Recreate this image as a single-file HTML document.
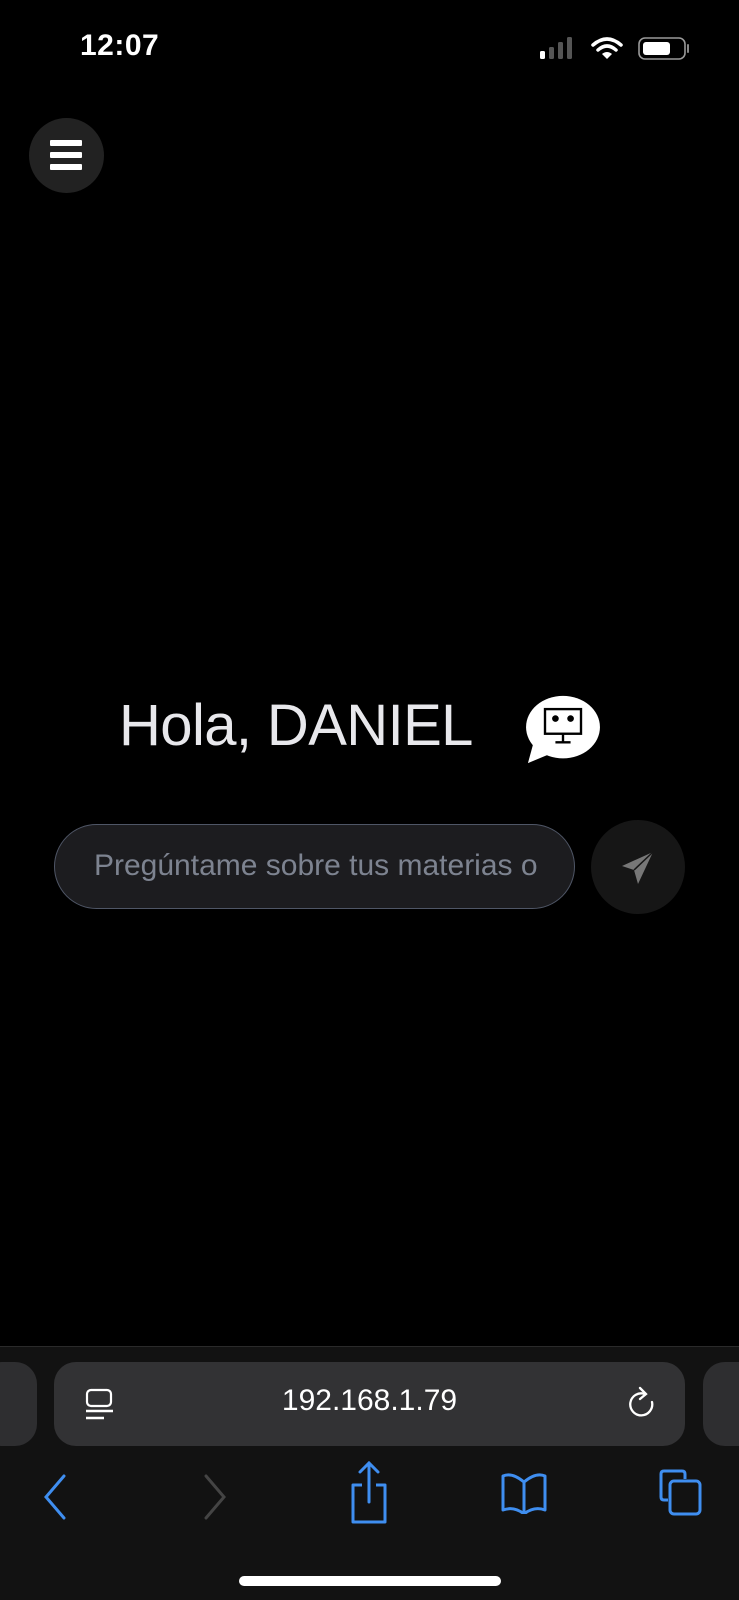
<!DOCTYPE html>
<html><head><meta charset="utf-8"><style>
*{margin:0;padding:0;box-sizing:border-box}
body{width:739px;height:1600px;background:#000;position:relative;overflow:hidden;font-family:"Liberation Sans",sans-serif;color:#fff}
.abs{position:absolute}
</style></head><body>
<div class="abs" style="left:80px;top:29px;font-size:30px;font-weight:bold;letter-spacing:0.5px">12:07</div>
<svg class="abs" style="left:538px;top:36px" width="154" height="28" viewBox="0 0 154 28">
<rect x="2" y="15" width="5" height="8" rx="1.5" fill="#fff"/>
<rect x="11" y="11" width="5" height="12" rx="1.5" fill="#555"/>
<rect x="20" y="6" width="5" height="17" rx="1.5" fill="#555"/>
<rect x="29" y="1" width="5" height="22" rx="1.5" fill="#555"/>
<g transform="translate(10,0)">
<path d="M45 9 Q59 -3 73 9" stroke="#fff" stroke-width="3.5" fill="none" stroke-linecap="round"/>
<path d="M50 14 Q59 6 68 14" stroke="#fff" stroke-width="3.5" fill="none" stroke-linecap="round"/>
<path d="M54 18 L59 23 L64 18 Q59 14 54 18Z" fill="#fff"/>
</g>
<rect x="101" y="2" width="46" height="21" rx="6" stroke="#999" stroke-width="1.6" fill="none"/>
<rect x="105" y="6" width="27" height="13" rx="3" fill="#fff"/>
<path d="M150 9 v7" stroke="#888" stroke-width="2" stroke-linecap="round"/>
</svg>
<div class="abs" style="left:29px;top:118px;width:75px;height:75px;border-radius:50%;background:#222"></div>
<div class="abs" style="left:50px;top:140px;width:32px;height:6px;background:#fff;border-radius:1px"></div>
<div class="abs" style="left:50px;top:152px;width:32px;height:6px;background:#fff;border-radius:1px"></div>
<div class="abs" style="left:50px;top:164px;width:32px;height:6px;background:#fff;border-radius:1px"></div>
<div class="abs" style="left:119px;top:692px;font-size:58px;color:#e8e8ec;letter-spacing:-0.6px;white-space:nowrap">Hola, DANIEL</div>
<svg class="abs" style="left:524px;top:693px" width="78" height="72" viewBox="0 0 82 76">
<ellipse cx="41" cy="36" rx="39" ry="33" fill="#fff"/>
<path d="M10 52 L4 74 L28 64Z" fill="#fff"/>
<rect x="22" y="17" width="38" height="26" fill="none" stroke="#000" stroke-width="2.5"/>
<circle cx="33" cy="27" r="3.5" fill="#000"/><circle cx="49" cy="27" r="3.5" fill="#000"/>
<path d="M41 43 v9 M33 52 h16" stroke="#000" stroke-width="2.5"/>
</svg>
<div class="abs" style="left:54px;top:824px;width:521px;height:85px;border-radius:43px;background:#1c1c1f;border:1.5px solid #4f5666"></div>
<div class="abs" style="left:94px;top:849px;width:444px;overflow:hidden;white-space:nowrap;font-size:30px;color:#7d8390">Pregúntame sobre tus materias o</div>
<div class="abs" style="left:591px;top:820px;width:94px;height:94px;border-radius:50%;background:#161616"></div>
<svg class="abs" style="left:620px;top:850px" width="36" height="36" viewBox="0 0 36 36"><path d="M33 2 L2 16 L14 20 L18 34Z" fill="#777"/><path d="M33 2 L14 20" stroke="#161616" stroke-width="1.5"/></svg>
<div class="abs" style="left:0;top:1346px;width:739px;height:254px;background:#121212;border-top:1px solid #2a2a2a"></div>
<div class="abs" style="left:-20px;top:1362px;width:57px;height:84px;border-radius:22px;background:#2e2e30"></div>
<div class="abs" style="left:703px;top:1362px;width:60px;height:84px;border-radius:22px;background:#2e2e30"></div>
<div class="abs" style="left:54px;top:1362px;width:631px;height:84px;border-radius:22px;background:#323234"></div>
<svg class="abs" style="left:84px;top:1388px" width="32" height="34" viewBox="0 0 32 34"><rect x="3" y="2" width="24" height="16" rx="4" fill="none" stroke="#fff" stroke-width="2.2"/><path d="M2 23h27M2 30h18" stroke="#fff" stroke-width="2.5"/></svg>
<div class="abs" style="left:0;top:1384px;width:739px;text-align:center;font-size:30px;color:#fff">192.168.1.79</div>
<svg class="abs" style="left:626px;top:1386px" width="32" height="36" viewBox="0 0 32 36"><path d="M19 8 A11 11 0 1 0 26 16" fill="none" stroke="#fff" stroke-width="2.3" stroke-linecap="round"/><path d="M14 2 L20 8 L14 13" fill="none" stroke="#fff" stroke-width="2.3" stroke-linecap="round"/></svg>
<svg class="abs" style="left:40px;top:1470px" width="30" height="50" viewBox="0 0 30 50"><path d="M24 6 L6 27 L24 48" fill="none" stroke="#3f8ef0" stroke-width="3" stroke-linecap="round"/></svg>
<svg class="abs" style="left:200px;top:1470px" width="30" height="50" viewBox="0 0 30 50"><path d="M6 6 L24 27 L6 48" fill="none" stroke="#444" stroke-width="3" stroke-linecap="round"/></svg>
<svg class="abs" style="left:348px;top:1460px" width="42" height="64" viewBox="0 0 42 64"><path d="M14 25 H5 V62 H37 V25 H28" fill="none" stroke="#3f8ef0" stroke-width="3" stroke-linejoin="round"/><path d="M21 3 V42 M12 12 L21 3 L30 12" fill="none" stroke="#3f8ef0" stroke-width="3" stroke-linecap="round"/></svg>
<svg class="abs" style="left:500px;top:1470px" width="48" height="44" viewBox="0 0 48 44"><path d="M24 12 Q12 2 3 6 V40 Q14 36 24 44 Q34 36 45 40 V6 Q36 2 24 12Z M24 12 V44" fill="none" stroke="#3f8ef0" stroke-width="3" stroke-linejoin="round"/></svg>
<svg class="abs" style="left:658px;top:1468px" width="46" height="48" viewBox="0 0 46 48"><path d="M10 32 H6 Q3 32 3 29 V6 Q3 3 6 3 H24 Q27 3 27 6 V11" fill="none" stroke="#3f8ef0" stroke-width="3"/><rect x="12" y="13" width="30" height="33" rx="4" fill="none" stroke="#3f8ef0" stroke-width="3"/></svg>
<div class="abs" style="left:239px;top:1576px;width:262px;height:10px;border-radius:5px;background:#fff"></div>
</body></html>
